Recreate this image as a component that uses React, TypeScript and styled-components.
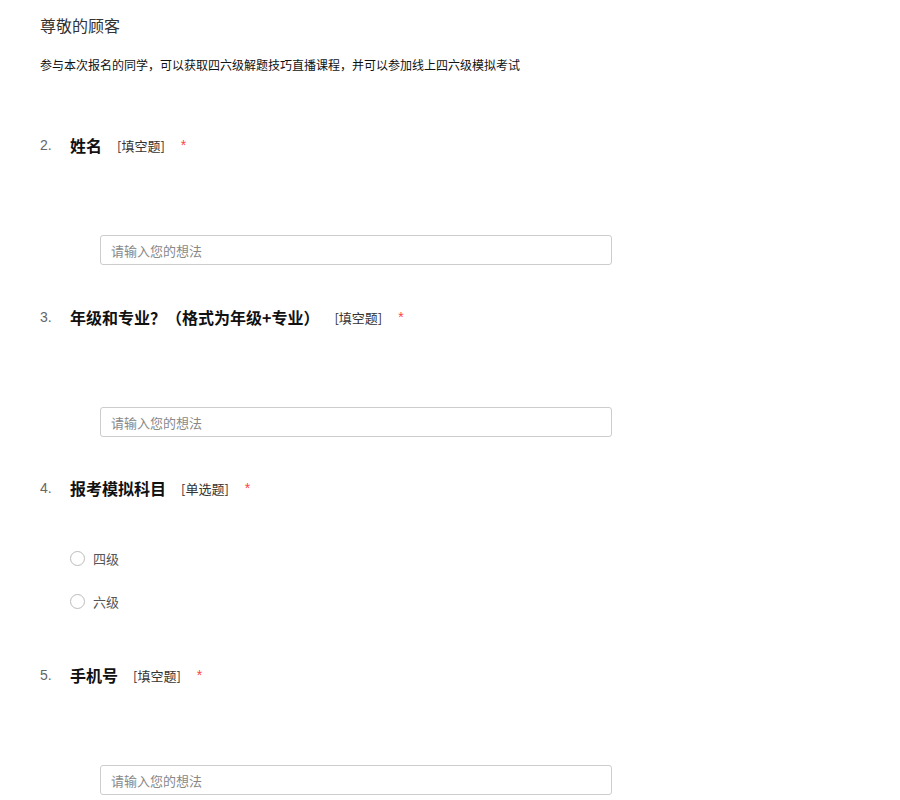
import React from "react";
import styled, { createGlobalStyle } from "styled-components";

const Global = createGlobalStyle`
  body {
    margin: 0;
    background: #fff;
    font-family: "Microsoft YaHei", "Noto Sans CJK SC", "Noto Sans", sans-serif;
  }
`;

const Page = styled.div`
  padding: 15px 0 0 40px;
  width: 860px;
`;

const Heading = styled.div`
  font-size: 16px;
  line-height: 20px;
  height: 20px;
  color: #333;
`;

const Desc = styled.div`
  margin-top: 21px;
  font-size: 12px;
  line-height: 18px;
  color: #111;
`;

const Question = styled.div<{ $top: number }>`
  margin-top: ${(p) => p.$top}px;
`;

const Header = styled.div`
  display: flex;
  align-items: center;
  height: 24px;
`;

const Num = styled.span`
  width: 30px;
  font-size: 14px;
  color: #666;
  font-family: "Liberation Sans", "Noto Sans CJK SC", sans-serif;
`;

const Title = styled.span`
  font-size: 16px;
  font-weight: bold;
  color: #111;
`;

const Kind = styled.span`
  margin-left: 15px;
  font-size: 13px;
  color: #333;
`;

const Star = styled.span`
  margin-left: 16px;
  color: #f44;
  font-size: 14px;
  font-family: "Liberation Sans", sans-serif;
`;

const Input = styled.input`
  display: block;
  box-sizing: border-box;
  margin: 78px 0 0 60px;
  width: 512px;
  height: 30px;
  border: 1px solid #ccc;
  border-radius: 3px;
  padding: 0 10px;
  font-size: 13px;
  font-family: inherit;
  color: #333;
  outline: none;
  &::placeholder {
    color: #888;
  }
`;

const Options = styled.div`
  display: flex;
  flex-direction: column;
  gap: 23px;
  margin: 48px 0 0 30px;
`;

const Option = styled.label`
  display: flex;
  align-items: center;
  height: 20px;
  font-size: 13px;
  color: #555;
`;

const Circle = styled.span`
  box-sizing: border-box;
  width: 15px;
  height: 15px;
  border: 1px solid #bbb;
  border-radius: 50%;
  margin-right: 8px;
`;

type Q = {
  n: number;
  title: string;
  kind: string;
  options?: string[];
  top: number;
};

const questions: Q[] = [
  { n: 2, title: "姓名", kind: "[填空题]", top: 59 },
  { n: 3, title: "年级和专业？（格式为年级+专业）", kind: "[填空题]", top: 40 },
  { n: 4, title: "报考模拟科目", kind: "[单选题]", options: ["四级", "六级"], top: 39 },
  { n: 5, title: "手机号", kind: "[填空题]", top: 52 },
];

export default function App() {
  return (
    <>
      <Global />
      <Page>
        <Heading>尊敬的顾客</Heading>
        <Desc>参与本次报名的同学，可以获取四六级解题技巧直播课程，并可以参加线上四六级模拟考试</Desc>
        {questions.map((q) => (
          <Question key={q.n} $top={q.top}>
            <Header>
              <Num>{q.n}.</Num>
              <Title>{q.title}</Title>
              <Kind>{q.kind}</Kind>
              <Star>*</Star>
            </Header>
            {q.options ? (
              <Options>
                {q.options.map((o) => (
                  <Option key={o}>
                    <Circle />
                    {o}
                  </Option>
                ))}
              </Options>
            ) : (
              <Input placeholder="请输入您的想法" />
            )}
          </Question>
        ))}
      </Page>
    </>
  );
}
